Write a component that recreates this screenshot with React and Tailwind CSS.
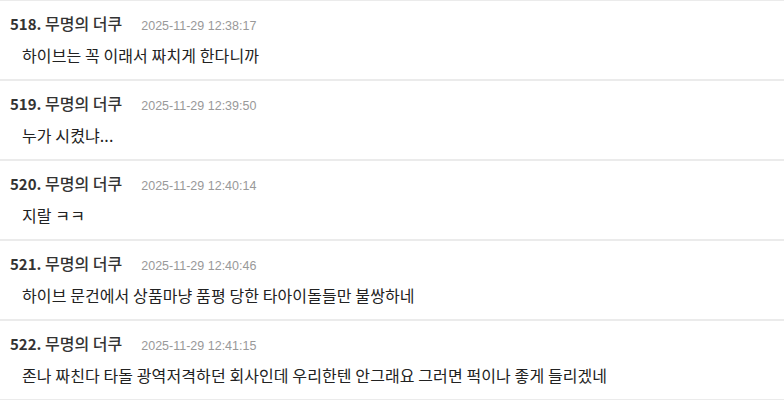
import React from 'react'

const comments = [
  { no: 518, name: '무명의 더쿠', date: '2025-11-29 12:38:17', text: '하이브는 꼭 이래서 짜치게 한다니까' },
  { no: 519, name: '무명의 더쿠', date: '2025-11-29 12:39:50', text: '누가 시켰냐...' },
  { no: 520, name: '무명의 더쿠', date: '2025-11-29 12:40:14', text: '지랄 ㅋㅋ' },
  { no: 521, name: '무명의 더쿠', date: '2025-11-29 12:40:46', text: '하이브 문건에서 상품마냥 품평 당한 타아이돌들만 불쌍하네' },
  { no: 522, name: '무명의 더쿠', date: '2025-11-29 12:41:15', text: '존나 짜친다 타돌 광역저격하던 회사인데 우리한텐 안그래요 그러면 퍽이나 좋게 들리겠네' },
]

function CommentItem({ no, name, date, text }) {
  return (
    <li className="h-[80px] border-y border-[#ebebeb] bg-white">
      <div className="flex items-baseline pl-[10px] pt-[11px] h-[34px]">
        <span className="text-[#333] leading-[22px]">
          <span className="font-bold text-[15px]">{no}.</span>{' '}
          <span className="font-medium text-[16px]">{name}</span>
        </span>
        <span className="ml-[19px] text-[12.5px] text-[#999] leading-[22px] font-['Liberation_Sans',sans-serif]">{date}</span>
      </div>
      <p className="pl-[22px] pt-[9px] text-[16px] leading-[22px] text-[#222] tracking-[0.1px]">{text}</p>
    </li>
  )
}

export default function App() {
  return (
    <div className="w-[784px] min-h-[407px] bg-white font-['Noto_Sans_CJK_KR','Noto_Sans',sans-serif]">
      <ul>
        {comments.map(c => <CommentItem key={c.no} {...c} />)}
      </ul>
    </div>
  )
}
